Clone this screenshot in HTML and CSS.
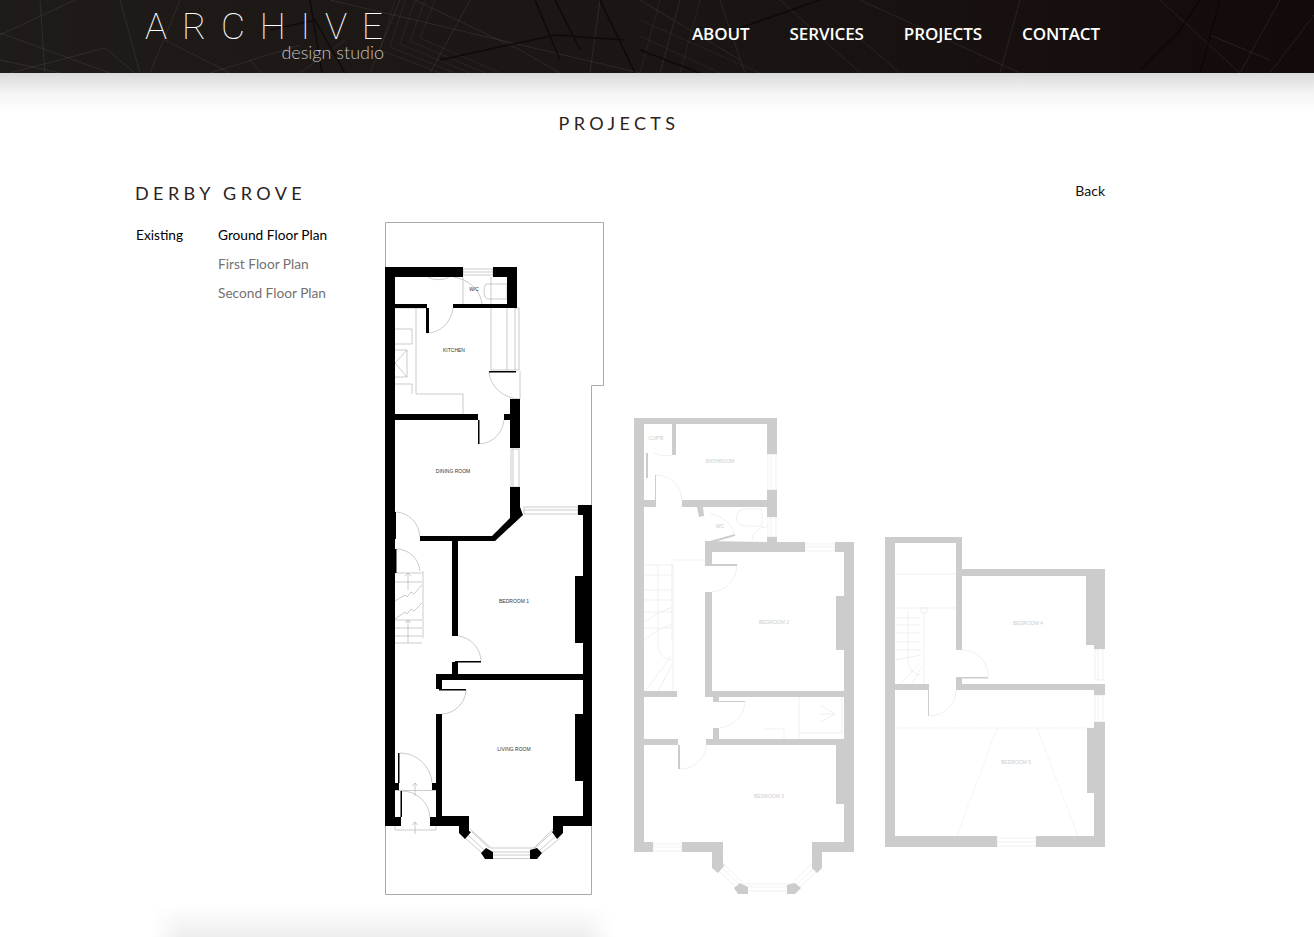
FILE: index.html
```html
<!DOCTYPE html>
<html lang="en">
<head>
    <meta charset="UTF-8">
    <meta name="viewport" content="width=device-width, initial-scale=1.0">
    <title>Archive Design Studio - Derby Grove</title>
    <link rel="stylesheet" href="styles.css">
</head>
<body>

<!-- Top bar -->
<header class="top-bar">
    <svg class="top-bar-lines" viewBox="0 0 1314 73" preserveAspectRatio="none" aria-hidden="true">
        <g class="line-light">
            <path d="M0 35 L75 0 M0 33 L110 73 M10 73 L105 48 L135 73 M40 0 L45 73 M120 0 L140 73 M0 60 L60 73"/>
            <path d="M165 40 L230 73 M180 0 L150 73 M210 73 L300 45 M250 60 L262 73 M300 73 L345 40"/>
            <path d="M415 0 L520 50 L560 73 M400 0 L370 73 M470 0 L430 73 M330 0 L640 73 M600 0 L590 73"/>
            <path d="M640 0 L740 60 M680 0 L660 73 M720 0 L745 73 M780 0 L860 73 M860 0 L1020 73 M850 30 L900 73"/>
            <path d="M1020 0 L1000 73 M1160 0 L1240 73 M1210 35 L1270 60 M1280 0 L1240 73 M1314 15 L1270 73"/>
        </g>
        <g class="line-hatch">
            <path d="M395 0 L380 50 L440 73 M405 0 L390 47 L455 73 M415 0 L400 44 L470 73 M425 0 L410 41 L485 73 M435 0 L420 38 L500 73"/>
            <path d="M640 20 L760 73 M640 36 L720 73 M700 0 L680 73 M660 0 L640 73"/>
        </g>
        <g class="line-dark">
            <path d="M270 30 L315 20 L345 73 M310 0 L322 73 M440 60 L555 35 L625 40 M535 0 L560 60 M555 0 L580 50 M600 0 L635 73 M640 50 L700 73"/>
            <path d="M720 35 L820 0 M1140 70 L1180 30 L1200 0 M1200 73 L1220 0"/>
        </g>
    </svg>

    <a href="#" class="logo">
        <span class="logo-name">ARCHIVE</span>
        <span class="logo-sub">design studio</span>
    </a>

    <nav class="top-nav">
        <a href="#">ABOUT</a>
        <a href="#">SERVICES</a>
        <a href="#">PROJECTS</a>
        <a href="#">CONTACT</a>
    </nav>
</header>

<div class="container">
    <h1>PROJECTS</h1>

    <div class="project-head">
        <h2>DERBY GROVE</h2>
        <a href="#" class="back">Back</a>
    </div>

    <div class="project-body">
        <!-- Plan menu -->
        <div class="plan-menu">
            <a href="#" class="plan-group">Existing</a>
            <ul>
                <li><a href="#" class="active">Ground Floor Plan</a></li>
                <li><a href="#">First Floor Plan</a></li>
                <li><a href="#">Second Floor Plan</a></li>
            </ul>
        </div>

        <div class="plans">
            <!-- Ground floor. All three drawings use page coordinates in the viewBox -->
            <svg class="plan plan-ground" viewBox="385 222 219 673" width="219" height="673">
                <path class="site" d="M385.5 222.5 H603.5 V385.5 H591.5 V894.5 H385.5 Z"/>
                <path class="fine" d="M427 333 A26 29 0 0 0 453 308 M463 277 V304 M491 304 V277 M453 277 A34 30 0 0 1 482 304"/>
                <path class="fine" d="M427 308 H395 M416 308 V394 H463 V414 M395 329 H412 V344 H395 M395 350 H407 V377 H395 M407 350 L395 363 L407 377 M395 384 H412 V394"/>
                <path class="fine" d="M491 308 V370 H515 V308 M507 308 V370 M515 308 H519 V370 H515"/>
                <path class="fine" d="M428 277 A14 8 0 0 0 449 277 M486 284 H507 V299 H488 A4 8 0 0 1 486 284 M463 269 H493 V275 H463 Z M463 272 H493"/>
                <path class="fine" d="M489 373 A32 30 0 0 0 520 399 M520 371 V399 M479 444 A26 26 0 0 0 504 420"/>
                <path class="fine" d="M511 449 H519 V487 H511 Z M513 449 V487 M524 507 H578 V514 H524 Z M524 510 H578"/>
                <path class="fine" d="M396 512 A25 27 0 0 1 420 537 M396 549 A24 24 0 0 1 420 571 M458 636 A26 26 0 0 1 481 661 M442 714 A25 25 0 0 0 466 690"/>
                <path class="fine" d="M400 753 A32 32 0 0 1 432 783 M402 791 A28 28 0 0 1 430 817 M395 790.5 H436 M395 830 H436 M395 826 V830 M436 826 V830"/>
                <path class="fine" d="M395 573 H422 M395 582 H422 M395 620 H422 M395 628 H422 M395 636 H422 M395 643 H422 M423 571 V638 M408 573 V590 M405 576 L408 573 L411 576 M408 620 V643 M405 623 L408 620 L411 623"/>
                <path class="fine" d="M395 601 L405 595 L407 597 L411 592 L414 594 L422 585 M395 619 L405 612 L407 614 L411 609 L414 611 L422 603"/>
                <path class="fine" d="M415 783 V796 M412.500 786 L415 783 L417.500 786 M415 822 V834 M412.500 825 L415 822 L417.500 825"/>
                <path class="fine" d="M470 829 L491 848 H534 L553 829 M465 838 L482 853 M468 835 L485 851 M472 832 L489 848 M493 852 H530 M493 855 H530 M493 858.500 H530 M560 838 L542 853 M557 835 L539 851 M553 832 L535 848"/>

                <path class="wall" d="M385 267 H463 V277 H395 V304 H427 V308 H395 V414 H478 V420 H395 V817 H401 V826 H385 Z"/>
                <path class="wall" d="M493 267 H517 V308 H453 V304 H507 V277 H493 Z"/>
                <path class="wall" d="M426 308 H429 V333 H426 Z M478 420 H479.500 V444 H478 Z M489 371 H516 V372.500 H489 Z"/>
                <path class="wall" d="M510 399 H520 V448 H510 V420 H504 V414 H510 Z"/>
                <path class="wall" d="M510 487 H520 V507 L523 515 L495 541 H420 V536 H492 L510 518 Z"/>
                <path class="wall" d="M452 541 H458 V636 H452 Z M452 662 H458 V674 H452 Z M455 661 H481 V662.500 H455 Z"/>
                <path class="wall" d="M578 505 H592 V826 H563 V833 L557 839 L552 832 L553 831 V816 H583 V781 H575 V714 H583 V680 H442 V689 H466 V690.500 H439 V689 H436 V674 H583 V643 H575 V576 H583 V515 H578 Z"/>
                <path class="wall" d="M436 714 H442 V816 H469 V831 L471 832 L465 839 L459 833 V826 H430 V817 H436 Z"/>
                <path class="wall" d="M395 783 H399 V790 H395 Z M432 783 H436 V790 H432 Z M398 753 H399.500 V783 H398 Z M400.500 791 H402 V817 H400.500 Z M395 512 H396 V539 H395 Z M395 549 H396.500 V573 H395 Z"/>
                <path class="wall" d="M481 853 L486 848 L493 852 V859 H485 Z M530 859 V850 L537 848 L542 853 L537 859 Z"/>

                <text x="454" y="352">KITCHEN</text>
                <text x="474" y="291">W/C</text>
                <text x="453" y="473">DINING ROOM</text>
                <text x="514" y="603">BEDROOM 1</text>
                <text x="514" y="751">LIVING ROOM</text>
            </svg>

            <!-- First floor -->
            <svg class="plan plan-faded plan-first" viewBox="634 418 220 477" width="220" height="477">
                <path class="fine" d="M654 453 A26 24 0 0 0 672 455 M656 475 A26 26 0 0 1 682 500 M710 514 A30 26 0 0 1 735 536 M737 565 A26 28 0 0 1 712 592 M745 701 A28 28 0 0 1 719 728 M706 745 A26 24 0 0 1 680 769"/>
                <path class="fine" d="M768 454 H776 V490 H768 Z M771 454 V490 M768 517 H776 V537 H768 Z M771 517 V537 M805 544 H835 V551 H805 Z M805 547 H835 M653 844 H682 V851 H653 Z M653 847 H682"/>
                <path class="fine" d="M644 565 H673 V691 M672 563 V640 M644 575 H672 M644 590 H672 M644 600 H672 M644 612 H672 M644 628 H672 M644 622 L655 615 L672 607 M644 640 L655 632 L672 624 M645 691 L672 655 M658 691 L672 665 M658 565 V646 A15 15 0 0 0 672 660 M673 560 H705"/>
                <path class="fine" d="M745 509 H762 V526 H745 A8 8 0 0 1 745 509 M752 540 A14 14 0 0 1 767 527 M799 697 V739 M799 733 H842 M842 697 V733 M765 729 H784 V739 M820 705 L835 714 L820 722 M819 714 H835"/>
                <path class="fine" d="M723 863 L744 884 H792 L812 863 M718 870 L736 887 M721 867 L739 884 M748 887 H787 M748 891 H787 M818 870 L800 887 M815 867 L797 884"/>

                <path class="wall" d="M634 418 H777 V454 H767 V424 H676 V455 H672 V424 H644 V500 H655 V475 H656 V507 H644 V691 H677 V697 H644 V739 H678 V769 H680 V745 H644 V842 H653 V852 H634 Z"/>
                <path class="wall" d="M767 490 H777 V517 H767 V507 H682 V500 H767 Z M767 537 H777 V542 H805 V552 H712 V564 H737 V566 H712 V566 H705 V541 L767 542 Z"/>
                <path class="wall" d="M646 453 H648 V478 H646 Z M697 507 H703 L704 516 L699 517 Z M710 541 L735 534 L735 536 L711 543 Z"/>
                <path class="wall" d="M835 542 H854 V852 H822 V868 L817 873 L812 868 V842 H844 V804 H836 V745 H706 V739 H713 V728 H719 V739 H844 V697 H719 V701 H745 V702 H713 V697 H705 V592 H712 V691 H844 V650 H836 V596 H844 V552 H835 Z"/>
                <path class="wall" d="M682 842 H723 V863 L724 866 L718 873 L712 868 V852 H682 Z M734 888 L740 883 L748 887 V894 H738 Z M787 894 V885 L795 883 L801 888 L795 894 Z"/>

                <text x="656" y="440">CUP'B</text>
                <text x="720" y="463">BATHROOM</text>
                <text x="720" y="528">WC</text>
                <text x="774" y="624">BEDROOM 2</text>
                <text x="769" y="798">BEDROOM 3</text>
            </svg>

            <!-- Second floor -->
            <svg class="plan plan-faded plan-second" viewBox="885 537 220 311" width="220" height="311">
                <path class="fine" d="M895 574 H956 M895 608 H956 M895 618 H921 M895 625 H921 M895 633 H921 M895 642 H921 M895 650 H921 M895 660 L921 655 M900 684 L921 662 M912 684 L921 668 M908 610 V660 A14 14 0 0 0 921 675 M924 612 V684 M921 608 H927 V613 H921 Z"/>
                <path class="fine" d="M962 650 A26 26 0 0 1 988 677 M956 690 A27 26 0 0 1 930 716 M1095 649 H1103 V680 H1095 Z M1098 649 V680 M1095 695 H1103 V722 H1095 Z M1098 695 V722 M997 838 H1036 V846 H997 Z M997 842 H1036"/>
                <path class="fine dashed" d="M895 728 H1094 M997 728 L957 836 M1037 728 L1078 836"/>

                <path class="wall" d="M885 537 H962 V569 H1105 V649 H1094 V645 H1086 V576 H962 V650 H956 V543 H895 V684 H929 V716 H928 V690 H895 V836 H997 V847 H885 Z"/>
                <path class="wall" d="M956 677 H962 V684 H1105 V695 H1094 V690 H956 Z M962 677 H988 V678.500 H962 Z"/>
                <path class="wall" d="M1094 722 H1105 V847 H1036 V836 H1094 V793 H1087 V728 H1094 Z"/>

                <text x="1028" y="625">BEDROOM 4</text>
                <text x="1016" y="764">BEDROOM 5</text>
            </svg>
        </div>
    </div>

    <div class="bottom-shade"></div>
</div>

</body>
</html>
```

FILE: styles.css
```css
/* Reset default margin and padding */
* {
    margin: 0;
    padding: 0;
    box-sizing: border-box;
}

html, body {
    height: 937px;
    overflow: hidden;
}

body {
    font-family: "Lato", "Noto Sans", sans-serif;
    background-color: #fff;
    color: #000;
}

a {
    color: inherit;
    text-decoration: none;
}

/* Top bar */
.top-bar {
    position: relative;
    height: 73px;
    padding: 0 214px 0 145px;
    display: flex;
    justify-content: space-between;
    background: linear-gradient(90deg, #1f1b19 0%, #1b1614 50%, #130b0b 100%);
    overflow: hidden;
}

.top-bar-lines {
    position: absolute;
    left: 0;
    top: 0;
    width: 100%;
    height: 100%;
    fill: none;
    filter: blur(0.6px);
}

.line-light {
    stroke: rgba(255, 255, 255, 0.08);
    stroke-width: 1;
}

.line-hatch {
    stroke: rgba(255, 255, 255, 0.06);
    stroke-width: 1;
}

.line-dark {
    stroke: rgba(10, 6, 5, 0.7);
    stroke-width: 1.5;
}

.logo {
    position: relative;
    width: 239px;
    display: flex;
    flex-direction: column;
    color: #fff;
}

.logo-name {
    margin-top: 11px;
    font-family: "Roboto", sans-serif;
    font-weight: 100;
    font-size: 37px;
    line-height: 32px;
    letter-spacing: 14.8px;
    white-space: nowrap;
}

.logo-sub {
    margin-top: 1px;
    align-self: flex-end;
    font-family: "Lato", sans-serif;
    font-weight: 300;
    font-size: 18px;
    line-height: 17px;
    color: #c4c2c1;
}

.top-nav {
    position: relative;
    display: flex;
    align-items: center;
    gap: 40px;
    padding-bottom: 6px;
}

.top-nav a {
    font-family: "Open Sans", sans-serif;
    font-weight: 600;
    font-size: 17px;
    letter-spacing: -0.1px;
    color: #fff;
}

/* Page content */
.container {
    padding: 0 209px 0 135px;
    background: linear-gradient(#dadada 0, #f4f4f4 20px, #fff 38px) no-repeat;
    background-size: 100% 40px;
}

h1 {
    padding-top: 39px;
    height: 109px;
    margin-right: 2px;
    text-align: center;
    font-weight: 400;
    font-size: 18px;
    line-height: 22px;
    letter-spacing: 4.4px;
    color: #2b2320;
}

.project-head {
    display: flex;
    justify-content: space-between;
    height: 40px;
}

h2 {
    font-weight: 400;
    font-size: 18px;
    line-height: 22px;
    letter-spacing: 4.4px;
    color: #2b2320;
}

.back {
    font-size: 14px;
    line-height: 18px;
    color: #111;
}

.project-body {
    display: flex;
}

/* Plan menu */
.plan-menu {
    width: 250px;
    display: flex;
    font-size: 13.7px;
    line-height: 18px;
}

.plan-group {
    width: 83px;
    padding-top: 4px;
    padding-left: 1px;
    color: #000;
}

.plan-menu ul {
    list-style: none;
    padding-top: 4px;
}

.plan-menu li {
    margin-bottom: 11px;
}

.plan-menu li a {
    color: #74716f;
}

.plan-menu li a.active {
    color: #000;
}

/* Floor plans */
.plans {
    display: flex;
    align-items: flex-end;
    gap: 30px;
    height: 673px;
}

.plan {
    display: block;
    flex: none;
}

.plan-second {
    margin-left: 1px;
    margin-bottom: 47px;
}

.wall {
    fill: #000;
}

.site {
    fill: none;
    stroke: #aaa;
    stroke-width: 1;
}

.fine {
    fill: none;
    stroke: #a8a8a8;
    stroke-width: 0.6;
}

.dashed {
    stroke-dasharray: 2 1;
}

.plan text {
    font-family: "Liberation Sans", sans-serif;
    font-size: 5px;
    text-anchor: middle;
    fill: #333;
}

.plan-faded .wall {
    fill: #ccc;
}

.plan-faded .fine {
    stroke: #e6e6e6;
}

.plan-faded text {
    fill: #ccc;
}

/* Shade at the bottom edge of the window */
.bottom-shade {
    height: 32px;
    margin: 10px 0 0 15px;
    width: 465px;
    background: linear-gradient(rgba(238, 238, 238, 0), #eee);
    -webkit-mask-image: linear-gradient(90deg, transparent, #000 7%, #000 93%, transparent);
    mask-image: linear-gradient(90deg, transparent, #000 7%, #000 93%, transparent);
}
```
